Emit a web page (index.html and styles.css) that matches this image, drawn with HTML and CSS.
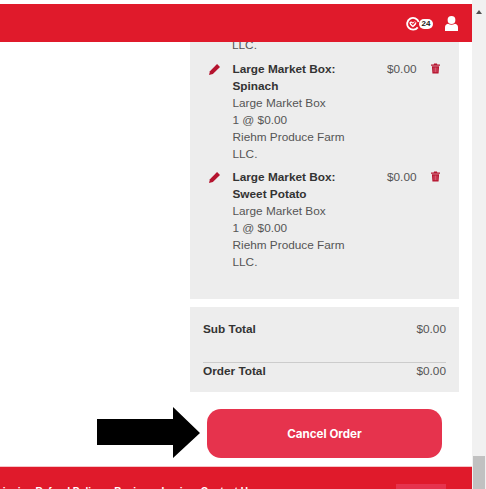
FILE: index.html
```html
<!DOCTYPE html>
<html lang="en">
<head>
<meta charset="utf-8">
<title>Cancel Order</title>
<link rel="stylesheet" href="styles.css">
</head>
<body>
<div class="page">
  <div class="viewport">
    <div class="top-gap"></div>
    <header class="header">
      <span class="cart-icon">
        <svg width="14" height="15" viewBox="0 0 15 15"><path d="M12.6 11.6A6.3 6.3 0 1 1 13.6 6" fill="none" stroke="#fff" stroke-width="2"/><path d="M3.8 6.2Q5.6 4.4 7.4 6.4 Q9.2 4.4 11 6.2 Q11.6 8.6 7.4 11.6 Q3.2 8.6 3.8 6.2Z" fill="#fff"/><path d="M5.6 7 7.4 8.8 10 5.8" fill="none" stroke="#e01a2b" stroke-width="1.2"/></svg>
        <span class="badge">24</span>
      </span>
      <svg class="user-icon" width="13" height="15" viewBox="0 0 13 15"><ellipse cx="6.5" cy="4" rx="3.9" ry="4" fill="#fff"/><path d="M0 15V11.6Q0 8.4 3 7.8 Q6.5 9.8 10 7.8 Q13 8.4 13 11.6V15Z" fill="#fff"/></svg>
    </header>
    <main class="content">
      <div class="column">
        <section class="items">
          <p class="clipped">LLC.</p>
          <article class="item">
            <svg class="edit" width="11" height="11" viewBox="0 0 12 12"><path d="M8.8 0 12 3.2 4.2 11 0 12 1 7.8Z" fill="#b5142f"/></svg>
            <div class="details">
              <strong>Large Market Box: Spinach</strong>
              <span>Large Market Box</span>
              <span>1 @ $0.00</span>
              <span>Riehm Produce Farm LLC.</span>
            </div>
            <span class="price">$0.00</span>
            <svg class="trash" width="9" height="11" viewBox="0 0 10 11"><path d="M3.4 0H6.6L7 1H10V2.4H0V1H3ZM1 3H9L8.4 11H1.6Z" fill="#b5142f"/><path d="M3.4 4.4V9.6M5 4.4V9.6M6.6 4.4V9.6" stroke="#eb8095" stroke-width=".7"/></svg>
          </article>
          <article class="item">
            <svg class="edit" width="11" height="11" viewBox="0 0 12 12"><path d="M8.8 0 12 3.2 4.2 11 0 12 1 7.8Z" fill="#b5142f"/></svg>
            <div class="details">
              <strong>Large Market Box: Sweet Potato</strong>
              <span>Large Market Box</span>
              <span>1 @ $0.00</span>
              <span>Riehm Produce Farm LLC.</span>
            </div>
            <span class="price">$0.00</span>
            <svg class="trash" width="9" height="11" viewBox="0 0 10 11"><path d="M3.4 0H6.6L7 1H10V2.4H0V1H3ZM1 3H9L8.4 11H1.6Z" fill="#b5142f"/><path d="M3.4 4.4V9.6M5 4.4V9.6M6.6 4.4V9.6" stroke="#eb8095" stroke-width=".7"/></svg>
          </article>
        </section>
        <section class="totals">
          <div class="row sub"><strong>Sub Total</strong><span>$0.00</span></div>
          <div class="row total"><strong>Order Total</strong><span>$0.00</span></div>
        </section>
        <div class="action">
          <svg class="arrow" width="106" height="52" viewBox="0 0 106 52"><path d="M0 12H76V0L103 26 76 51V38H0Z" fill="#000"/></svg>
          <button class="cancel" type="button">Cancel Order</button>
        </div>
      </div>
    </main>
    <footer class="footer">
      <nav class="links"><span>Shipping Refund Policy</span><span>Business Login</span><span>Contact Us</span></nav>
      <span class="foot-btn"></span>
    </footer>
  </div>
  <div class="scrollbar">
    <span class="up"></span>
    <span class="thumb"></span>
  </div>
</div>
</body>
</html>
```

FILE: styles.css
```css
* { box-sizing: border-box; }
html, body { margin: 0; height: 489px; overflow: hidden; background: #fff; }
body { font-family: "Liberation Sans", Arial, sans-serif; font-size: 11.8px; color: #555; }
.page { display: flex; width: 486px; height: 489px; }
.viewport { width: 472px; height: 489px; display: flex; flex-direction: column; overflow: hidden; }
.top-gap { height: 4px; flex: none; }
.header { flex: none; height: 38px; background: #e01a2b; display: flex; align-items: center; justify-content: flex-end; padding: 0 14px 0 0; gap: 12px; position: relative; z-index: 1; }
.cart-icon { display: flex; align-items: center; }
.badge { margin: 1px 0 0 -1px; width: 14px; height: 10px; border-radius: 5px; background: #fff; color: #222; font-size: 8px; font-weight: 700; line-height: 10px; text-align: center; }
.user-icon { display: block; }
.content { flex: none; height: 425px; display: flex; justify-content: flex-end; padding-right: 13px; }
.column { width: 269px; display: flex; flex-direction: column; }
.items { height: 257px; background: #ededed; padding: 0 0 0 42px; overflow: hidden; }
.clipped { margin: -5px 0 0; line-height: 17px; height: 16px; }
.item { display: flex; margin-left: -42px; padding: 8px 0 0 19px; height: 108px; }
.edit { flex: none; margin-top: 3px; }
.details { width: 120px; margin-left: 12.5px; display: flex; flex-direction: column; line-height: 16.9px; }
.details strong { color: #333; }
.price { margin-left: 34.5px; line-height: 17px; width: 32px; }
.trash { margin-left: 12px; margin-top: 2px; flex: none; }
.totals { margin-top: 8px; height: 85px; background: #ededed; padding: 0 13px; }
.row { display: flex; justify-content: space-between; line-height: 17px; }
.row strong { color: #333; }
.sub { padding-top: 14px; height: 55px; }
.total { border-top: 1px solid #ccc; padding-top: 0; }
.action { display: flex; align-items: flex-start; margin-top: 15px; height: 52px; margin-left: -93px; }
.arrow { flex: none; }
.cancel { margin: 2px 0 0 4px; width: 235px; height: 49px; border: 0; border-radius: 14px; background: #e6334d; color: #fff; font: 700 11.6px Inter, "Liberation Sans", sans-serif; }
.footer { flex: none; height: 22px; background: #e01a2b; box-shadow: 0 -1px #f6c5c9; display: flex; justify-content: space-between; color: #fff; font-weight: 700; font-size: 10px; overflow: hidden; }
.links { display: flex; gap: 12px; margin-left: -10px; padding-top: 19px; }
.foot-btn { width: 50px; height: 10px; margin: 17px 26px 0 0; background: #e6334d; }
.scrollbar { width: 14px; height: 489px; background: #f1f1f1; display: flex; flex-direction: column; align-items: center; }
.up { margin-top: 10px; width: 0; height: 0; border-left: 3px solid transparent; border-right: 3px solid transparent; border-bottom: 4px solid #505050; }
.thumb { margin-top: 442px; width: 12px; height: 33px; background: #c1c1c1; }
```
